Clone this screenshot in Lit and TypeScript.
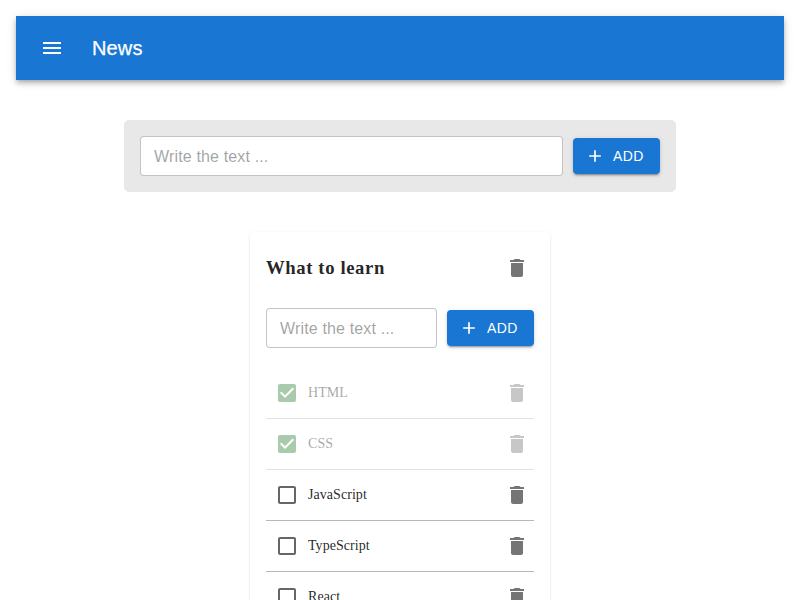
import { LitElement, html, css, svg } from "lit";
import { customElement, property } from "lit/decorators.js";

const deleteIcon = svg`<path d="M6 19c0 1.1.9 2 2 2h8c1.1 0 2-.9 2-2V7H6zM19 4h-3.5l-1-1h-5l-1 1H5v2h14z"></path>`;
const menuIcon = svg`<path d="M3 18h18v-2H3zm0-5h18v-2H3zm0-7v2h18V6z"></path>`;
const addIcon = svg`<path d="M19 13h-6v6h-2v-6H5v-2h6V5h2v6h6z"></path>`;
const checkedIcon = svg`<path d="M19 3H5c-1.11 0-2 .9-2 2v14c0 1.1.89 2 2 2h14c1.11 0 2-.9 2-2V5c0-1.1-.89-2-2-2zm-9 14l-5-5 1.41-1.41L10 14.17l7.59-7.59L19 8z"></path>`;
const uncheckedIcon = svg`<path d="M19 5v14H5V5zm0-2H5c-1.1 0-2 .9-2 2v14c0 1.1.9 2 2 2h14c1.1 0 2-.9 2-2V5c0-1.1-.9-2-2-2z"></path>`;

const shared = css`
  * { box-sizing: border-box; }
  svg { display: block; width: 24px; height: 24px; fill: currentColor; }
  button {
    display: inline-flex; align-items: center; justify-content: center;
    margin: 0; border: 0; background: transparent; cursor: pointer;
  }
`;

@customElement("add-item-form")
class AddItemForm extends LitElement {
  static styles = [shared, css`
    :host { display: flex; align-items: center; gap: 10px; }
    .field {
      flex: 1; min-width: 0; width: 0; height: 40px; margin: 0;
      padding: 9px 13px 7px; border: 1px solid rgba(0, 0, 0, 0.23); border-radius: 4px;
      background: #fff; outline: none;
      font: 400 16px "Liberation Sans", Arial, sans-serif;
      letter-spacing: 0.00938em; color: rgba(0, 0, 0, 0.87);
    }
    .field::placeholder { color: rgba(0, 0, 0, 0.87); opacity: 0.42; }
    .add {
      flex: none; width: 87px; height: 36px; padding: 6px 16px; border-radius: 4px;
      background: #1976d2; color: #fff;
      font: 400 14px/24.5px "Liberation Sans", Arial, sans-serif; letter-spacing: 0.02857em;
      box-shadow: 0 3px 1px -2px rgba(0,0,0,.2), 0 2px 2px 0 rgba(0,0,0,.14), 0 1px 5px 0 rgba(0,0,0,.12);
    }
    .add svg { width: 20px; height: 20px; margin: 0 8px 0 -4px; flex: none; }
  `];
  render() {
    return html`
      <input class="field" type="text" placeholder="Write the text ..." />
      <button class="add"><svg viewBox="0 0 24 24">${addIcon}</svg>ADD</button>`;
  }
}

interface Task { title: string; done: boolean; }

@customElement("todo-list")
class TodoList extends LitElement {
  @property() heading = "";
  @property({ attribute: false }) tasks: Task[] = [];

  static styles = [shared, css`
    :host {
      display: block; width: 300px; padding: 16px; border-radius: 4px; background: #fff;
      box-sizing: border-box; color: rgba(0, 0, 0, 0.87);
      font-family: "Liberation Serif", "Times New Roman", serif;
      box-shadow: 0 1px 3px rgba(0, 0, 0, 0.12);
    }
    .head { display: flex; align-items: center; justify-content: space-between; height: 40px; margin-bottom: 20px; }
    .title { margin: 0; font-size: 18.72px; line-height: 22px; font-weight: 700; letter-spacing: 0.6px; }
    .remove { padding: 5px; border-radius: 50%; color: rgba(0, 0, 0, 0.54); }
    .tasks { list-style: none; margin: 20px 0 0; padding: 0; }
    .task {
      display: flex; align-items: center; height: 51px; border-bottom: 1px solid #b7b7b7;
      font-size: 14px; line-height: 20px; letter-spacing: 0.05px;
    }
    .done { opacity: 0.4; }
    .check { padding: 9px; color: rgba(0, 0, 0, 0.6); }
    .done .check { color: #2e7d32; }
    .name { flex: 1; }
  `];
  render() {
    return html`
      <div class="head">
        <h3 class="title">${this.heading}</h3>
        <button class="remove" aria-label="Delete list"><svg viewBox="0 0 24 24">${deleteIcon}</svg></button>
      </div>
      <add-item-form></add-item-form>
      <ul class="tasks">
        ${this.tasks.map((t) => html`
          <li class="task ${t.done ? "done" : ""}">
            <button class="check" role="checkbox" aria-checked=${t.done ? "true" : "false"}>
              <svg viewBox="0 0 24 24">${t.done ? checkedIcon : uncheckedIcon}</svg>
            </button>
            <span class="name">${t.title}</span>
            <button class="remove" aria-label="Delete task"><svg viewBox="0 0 24 24">${deleteIcon}</svg></button>
          </li>`)}
      </ul>`;
  }
}

@customElement("app-root")
class AppRoot extends LitElement {
  static styles = [shared, css`
    :host {
      display: flex; flex-direction: column; align-items: center; height: 600px; overflow: hidden;
      padding: 16px; box-sizing: border-box; background: #fff;
    }
    .bar {
      flex: none; align-self: stretch; height: 64px; padding: 0 24px; display: flex; align-items: center;
      background: #1976d2; color: #fff;
      box-shadow: 0 2px 4px -1px rgba(0,0,0,.2), 0 4px 5px 0 rgba(0,0,0,.14), 0 1px 10px 0 rgba(0,0,0,.12);
    }
    .menu { padding: 12px; margin-left: -12px; margin-right: 16px; color: inherit; }
    .brand {
      font: 400 20px/32px "Liberation Sans", Arial, sans-serif; letter-spacing: 0.0075em;
      -webkit-text-stroke: 0.25px currentColor;
    }
    .panel {
      flex: none; width: 552px; height: 72px; margin: 40px 0; padding: 16px;
      background: #e8e8e8; border-radius: 5px;
    }
    todo-list { flex: none; }
  `];
  private tasks: Task[] = [
    { title: "HTML", done: true },
    { title: "CSS", done: true },
    { title: "JavaScript", done: false },
    { title: "TypeScript", done: false },
    { title: "React", done: false },
  ];
  render() {
    return html`
      <header class="bar">
        <button class="menu" aria-label="menu"><svg viewBox="0 0 24 24">${menuIcon}</svg></button>
        <div class="brand">News</div>
      </header>
      <section class="panel"><add-item-form></add-item-form></section>
      <todo-list heading="What to learn" .tasks=${this.tasks}></todo-list>`;
  }
}
